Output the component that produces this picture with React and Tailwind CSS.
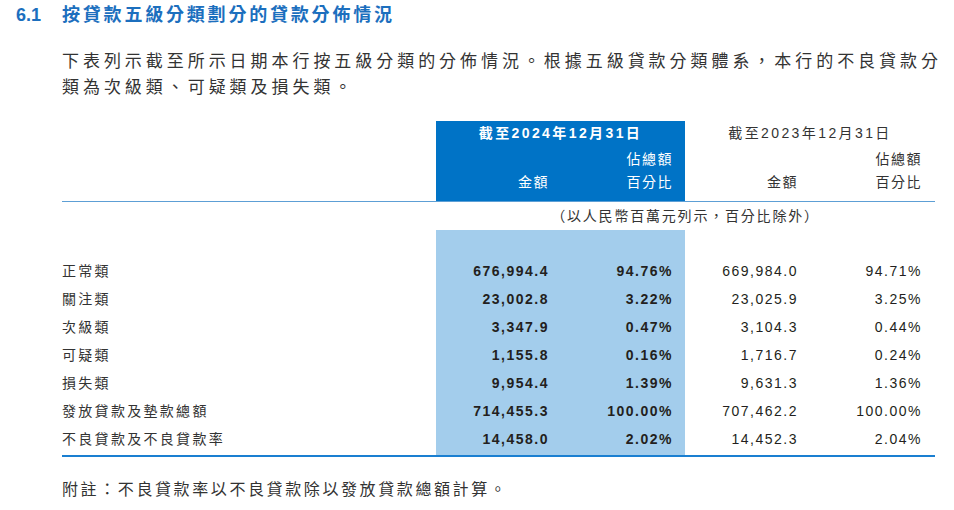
const rows = [
  { label: '正常類', a: '676,994.4', b: '94.76%', c: '669,984.0', d: '94.71%' },
  { label: '關注類', a: '23,002.8', b: '3.22%', c: '23,025.9', d: '3.25%' },
  { label: '次級類', a: '3,347.9', b: '0.47%', c: '3,104.3', d: '0.44%' },
  { label: '可疑類', a: '1,155.8', b: '0.16%', c: '1,716.7', d: '0.24%' },
  { label: '損失類', a: '9,954.4', b: '1.39%', c: '9,631.3', d: '1.36%' },
  { label: '發放貸款及墊款總額', a: '714,455.3', b: '100.00%', c: '707,462.2', d: '100.00%' },
  { label: '不良貸款及不良貸款率', a: '14,458.0', b: '2.02%', c: '14,452.3', d: '2.04%' },
]

function SubHead() {
  return (
    <div className="flex">
      <div className="w-[124px] h-[56px] flex items-end justify-end pr-[11px] pb-[7px] leading-[23px] tracking-[1.5px]">
        金額
      </div>
      <div className="w-[125px] h-[56px] flex flex-col items-end justify-end pr-[12px] pb-[7px] leading-[23px] tracking-[1.5px]">
        <span>佔總額</span>
        <span>百分比</span>
      </div>
    </div>
  )
}

export default function App() {
  return (
    <div className="w-[954px] h-[510px] overflow-hidden bg-white text-[#333] font-['Liberation_Sans','Noto_Sans_CJK_TC',sans-serif]">
      {/* Heading */}
      <div className="flex pt-[3px] text-[18px] leading-[24px] font-bold text-[#1c6fbe]">
        <span className="w-[62px] pl-[16px]">6.1</span>
        <span className="tracking-[2.8px]">按貸款五級分類劃分的貸款分佈情況</span>
      </div>

      {/* Intro */}
      <p className="ml-[62px] mt-[22px] text-[17px] leading-[26px] tracking-[3.95px] whitespace-nowrap">
        下表列示截至所示日期本行按五級分類的分佈情況。根據五級貸款分類體系，本行的不良貸款分
        <br />
        類為次級類、可疑類及損失類。
      </p>

      {/* Table */}
      <div className="ml-[62px] mt-[20px] w-[873px] text-[14px]">
        <div className="flex border-b border-[#5d9fd5]">
          <div className="w-[374px]" />
          <div className="w-[249px] h-[80px] bg-[#0073c6] text-white">
            <div className="h-[24px] leading-[24px] text-center font-bold tracking-[2.4px]">截至2024年12月31日</div>
            <SubHead />
          </div>
          <div className="w-[250px] h-[80px]">
            <div className="h-[24px] leading-[24px] text-center tracking-[2.4px]">截至2023年12月31日</div>
            <SubHead />
          </div>
        </div>

        <div className="flex h-[28px] items-center">
          <div className="w-[374px]" />
          <div className="flex-1 text-center tracking-[1.8px] pt-[1px]">（以人民幣百萬元列示，百分比除外）</div>
        </div>

        <div className="flex border-b-2 border-[#1a7fd1]">
          <div className="w-[374px] pt-[27px] pb-[2px] tracking-[2.3px]">
            {rows.map(r => (
              <div key={r.label} className="h-[28px] leading-[28px]">{r.label}</div>
            ))}
          </div>
          <div className="w-[249px] flex bg-[#a3cdec] pt-[27px] pb-[2px] font-bold text-[#231f20] tracking-[1.5px]">
            <div className="w-[124px] text-right pr-[11px]">
              {rows.map(r => (
                <div key={r.label} className="h-[28px] leading-[28px]">{r.a}</div>
              ))}
            </div>
            <div className="w-[125px] text-right pr-[12px]">
              {rows.map(r => (
                <div key={r.label} className="h-[28px] leading-[28px]">{r.b}</div>
              ))}
            </div>
          </div>
          <div className="w-[250px] flex pt-[27px] pb-[2px] text-[#231f20] tracking-[1.5px]">
            <div className="w-[125px] text-right pr-[12px]">
              {rows.map(r => (
                <div key={r.label} className="h-[28px] leading-[28px]">{r.c}</div>
              ))}
            </div>
            <div className="w-[125px] text-right pr-[13px]">
              {rows.map(r => (
                <div key={r.label} className="h-[28px] leading-[28px]">{r.d}</div>
              ))}
            </div>
          </div>
        </div>
      </div>

      {/* Note */}
      <p className="ml-[62px] mt-[21px] text-[16px] leading-[24px] tracking-[2.6px]">
        附註：不良貸款率以不良貸款除以發放貸款總額計算。
      </p>
    </div>
  )
}
